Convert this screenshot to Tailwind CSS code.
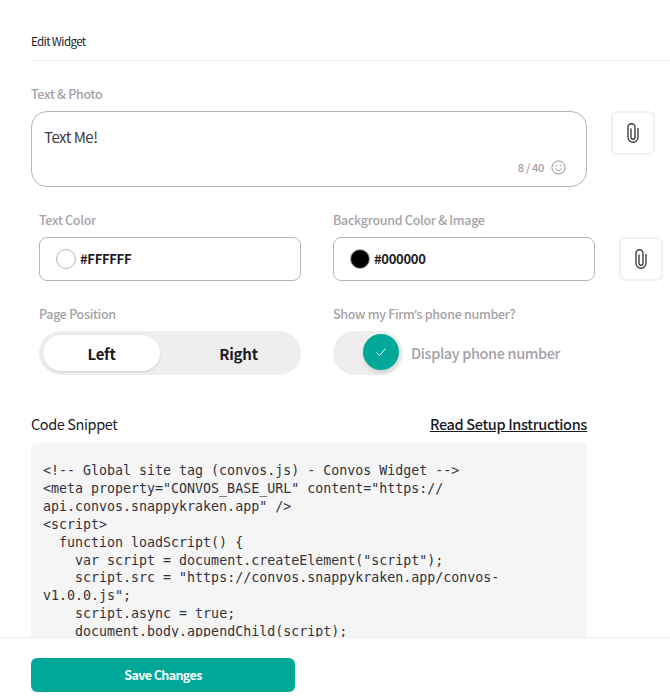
<!DOCTYPE html>
<html lang="en">
<head>
    <meta charset="UTF-8">
    <meta name="viewport" content="width=device-width, initial-scale=1.0">
    <title>Edit Widget</title>
    <script src="https://cdn.jsdelivr.net/npm/@tailwindcss/browser@4"></script>
</head>
<body class="bg-white font-['Noto_Sans_CJK_SC','Noto_Sans',sans-serif] text-[#1b1b1f]">
    <div class="h-[700px] flex flex-col overflow-hidden">
        <div class="h-[637px] overflow-hidden pl-[31px]">
            <!-- Header -->
            <div class="h-[61px] pt-[32px] border-b border-[#eeeeee] text-[11.5px] tracking-[-0.6px] leading-[18px]">Edit Widget</div>

            <!-- Text & Photo -->
            <div class="mt-[24px] text-[12.5px] tracking-[-0.3px] leading-[18px] font-medium text-[#a5a2a7]">Text &amp; Photo</div>
            <div class="mt-[8px] flex gap-[24px]">
                <div class="relative w-[556px] h-[76px] border border-[#b5b5b5] rounded-[16px] px-[12px] pt-[14px] text-[15px] tracking-[-0.5px] leading-[22px] text-[#3c3c42]">
                    Text Me!
                    <div class="absolute right-[20px] bottom-[11px] flex items-center gap-[7px] text-[11px] tracking-[-0.3px] leading-[16px] font-medium text-[#a09d9f]">
                        <span>8 / 40</span>
                        <svg class="w-[15px] h-[15px]" viewBox="0 0 16 16" fill="none" stroke="#8f8f8f" stroke-width="1"><circle cx="8" cy="8" r="7"/><path d="M4.8 9.2c.8 1.5 1.9 2.1 3.2 2.1s2.4-.6 3.2-2.1" stroke-linecap="round"/><path d="M5.4 6h.6M10 6h.6" stroke-linecap="round"/></svg>
                    </div>
                </div>
                <div class="w-[44px] h-[44px] border-2 border-[#f1f1f1] rounded-[6px] flex items-center justify-center">
                    <svg class="w-[12px] h-[20px]" viewBox="0 0 12 20" fill="none" stroke="#3f3f46" stroke-width="1.4" stroke-linecap="round"><path d="M4 6v8.2a2 2 0 0 0 4 0V4.2a3.5 3.5 0 0 0-7 0V14.2a5 5 0 0 0 10 0V5.5"/></svg>
                </div>
            </div>

            <!-- Colors -->
            <div class="mt-[24px] ml-[8px] flex">
                <div class="w-[262px]">
                    <div class="text-[12.5px] tracking-[-0.3px] leading-[18px] font-medium text-[#a5a2a7]">Text Color</div>
                    <div class="mt-[8px] h-[44px] border border-[#b5b5b5] rounded-[8px] flex items-center pl-[16px] gap-[4px]">
                        <span class="w-[20px] h-[20px] rounded-full bg-white border border-[#b5b5b5]"></span>
                        <span class="text-[13px] tracking-[-0.3px] font-bold">#FFFFFF</span>
                    </div>
                </div>
                <div class="ml-[32px] w-[262px]">
                    <div class="text-[12.5px] tracking-[-0.3px] leading-[18px] font-medium text-[#a5a2a7]">Background Color &amp; Image</div>
                    <div class="mt-[8px] h-[44px] border border-[#b5b5b5] rounded-[8px] flex items-center pl-[16px] gap-[4px]">
                        <span class="w-[20px] h-[20px] rounded-full bg-black border border-[#b5b5b5]"></span>
                        <span class="text-[13px] tracking-[-0.3px] font-bold">#000000</span>
                    </div>
                </div>
                <div class="ml-[24px] mt-[26px] w-[44px] h-[44px] border-2 border-[#f1f1f1] rounded-[6px] flex items-center justify-center">
                    <svg class="w-[12px] h-[20px]" viewBox="0 0 12 20" fill="none" stroke="#3f3f46" stroke-width="1.4" stroke-linecap="round"><path d="M4 6v8.2a2 2 0 0 0 4 0V4.2a3.5 3.5 0 0 0-7 0V14.2a5 5 0 0 0 10 0V5.5"/></svg>
                </div>
            </div>

            <!-- Position and phone -->
            <div class="mt-[24px] ml-[8px] flex">
                <div class="w-[262px]">
                    <div class="text-[12.5px] tracking-[-0.3px] leading-[18px] font-medium text-[#a5a2a7]">Page Position</div>
                    <div class="mt-[8px] h-[44px] rounded-full bg-[#eeeeee] p-[4px] flex text-[15px] tracking-[-0.2px] font-bold">
                        <div class="w-[117px] h-[36px] pt-[2px] rounded-full bg-white shadow-sm flex items-center justify-center">Left</div>
                        <div class="flex-1 pl-[20px] pt-[2px] flex items-center justify-center">Right</div>
                    </div>
                </div>
                <div class="ml-[32px]">
                    <div class="h-[18px] text-[12.5px] tracking-[-0.3px] leading-[18px] font-medium text-[#a5a2a7]">Show my Firm<span class="font-['Noto_Sans'] leading-none">’</span>s phone number?</div>
                    <div class="mt-[8px] flex items-center gap-[8px]">
                        <div class="w-[70px] h-[44px] rounded-full bg-[#eeeeee] flex justify-end pt-[3px] pr-[4px]">
                            <div class="w-[36px] h-[36px] rounded-full bg-[#00a899] shadow-md flex items-center justify-center">
                                <svg class="w-[12px] h-[12px]" viewBox="0 0 12 12" fill="none" stroke="white" stroke-width="1"><path d="M1.5 6.5l3 3 6-7"/></svg>
                            </div>
                        </div>
                        <span class="text-[14.5px] tracking-[-0.38px] font-medium text-[#a5a2a7]">Display phone number</span>
                    </div>
                </div>
            </div>

            <!-- Code snippet -->
            <div class="mt-[38px] w-[556px] flex justify-between items-center h-[22px]">
                <span class="text-[14.5px] tracking-[-0.4px]">Code Snippet</span>
                <a href="#" class="text-[14.5px] tracking-[-0.35px] font-medium underline">Read Setup Instructions</a>
            </div>
            <pre class="mt-[8px] w-[556px] bg-[#f5f5f5] rounded-[6px] px-[12px] pt-[19px] h-[300px] font-['DejaVu_Sans_Mono',monospace] text-[13.3px] leading-[17.9px] text-[#33333a] whitespace-pre-wrap">&lt;!-- Global site tag (convos.js) - Convos Widget --&gt;
&lt;meta property="CONVOS_BASE_URL" content="https://
api.convos.snappykraken.app" /&gt;
&lt;script&gt;
  function loadScript() {
    var script = document.createElement("script");
    script.src = "https://convos.snappykraken.app/convos-
v1.0.0.js";
    script.async = true;
    document.body.appendChild(script);
  }
</pre>
        </div>

        <!-- Footer -->
        <div class="flex-1 border-t border-[#eeeeee] bg-white pl-[31px] pt-[20px]">
            <button class="w-[264px] h-[34px] rounded-[6px] bg-[#00a899] text-white text-[12.5px] tracking-[-0.6px] font-bold">Save Changes</button>
        </div>
    </div>
</body>
</html>
